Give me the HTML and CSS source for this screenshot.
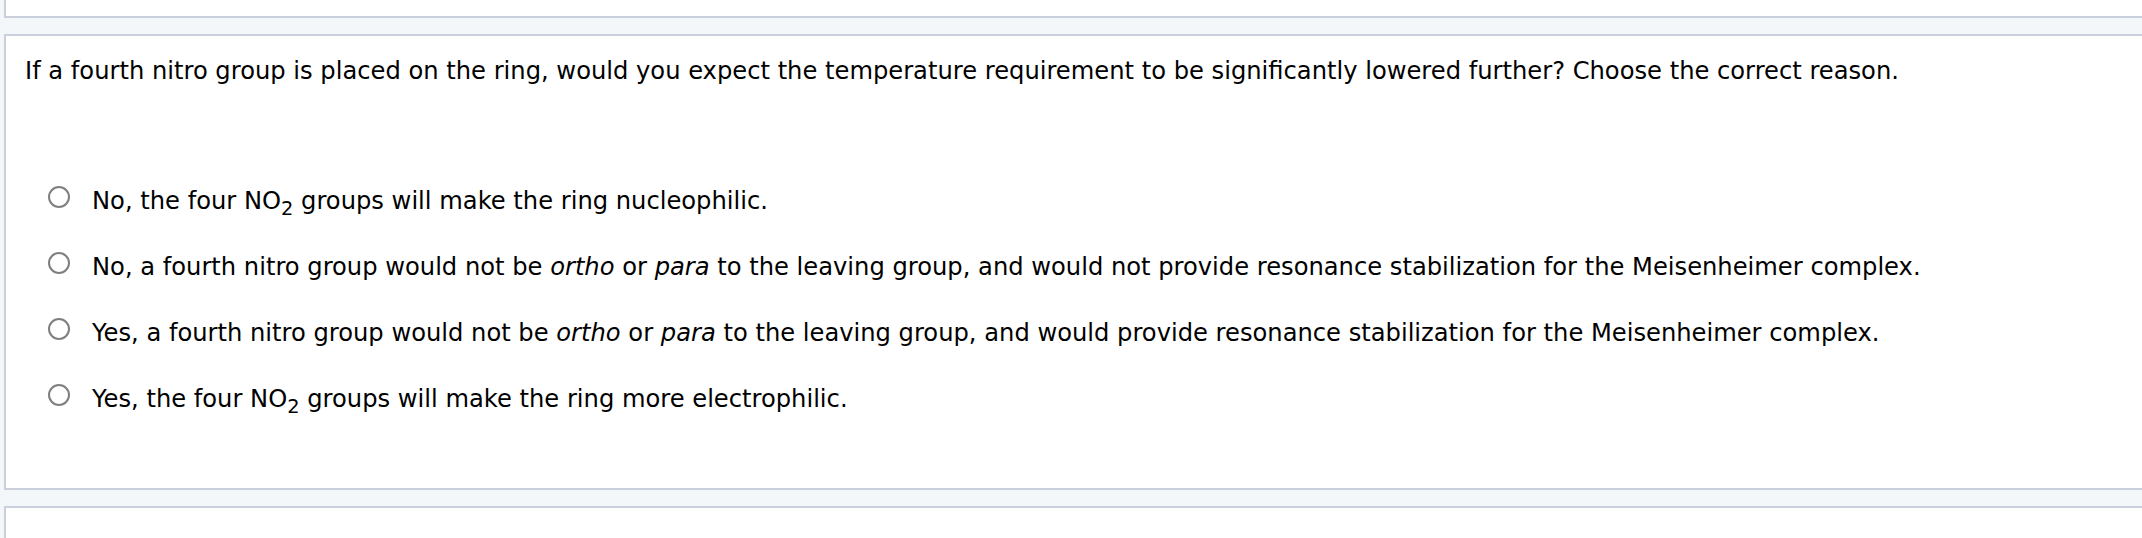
FILE: index.html
```html
<!DOCTYPE html>
<html lang="en">
<head>
<meta charset="utf-8">
<title>Question</title>
<link rel="stylesheet" href="styles.css">
</head>
<body>
<div class="page">
  <div class="panel panel-top"></div>
  <div class="panel panel-main">
    <p class="question">If a fourth nitro group is placed on the ring, would you expect the temperature requirement to be significantly lowered further? Choose the correct reason.</p>
    <div class="options">
      <label class="option"><span class="radio"></span><span class="option-text">No, the four NO<sub>2</sub> groups will make the ring nucleophilic.</span></label>
      <label class="option"><span class="radio"></span><span class="option-text">No, a fourth nitro group would not be <i>ortho</i> or <i>para</i> to the leaving group, and would not provide resonance stabilization for the Meisenheimer complex.</span></label>
      <label class="option"><span class="radio"></span><span class="option-text">Yes, a fourth nitro group would not be <i>ortho</i> or <i>para</i> to the leaving group, and would provide resonance stabilization for the Meisenheimer complex.</span></label>
      <label class="option"><span class="radio"></span><span class="option-text">Yes, the four NO<sub>2</sub> groups will make the ring more electrophilic.</span></label>
    </div>
  </div>
  <div class="panel panel-next"></div>
</div>
</body>
</html>
```

FILE: styles.css
```css
html, body {
  margin: 0;
  padding: 0;
  overflow: hidden;
  background: #f4f7fa;
}

body {
  font-family: "DejaVu Sans", Verdana, sans-serif;
  font-size: 24.2px;
  color: #000;
}

.page {
  display: flex;
  flex-direction: column;
  gap: 16px;
  padding-left: 4px;
  margin-right: -40px;
}

.panel {
  box-sizing: border-box;
  background: #fff;
  border: 2px solid #c9d0dc;
}

.panel-top {
  border-top: none;
  height: 18px;
}

.panel-main {
  height: 456px;
  padding: 20px 19px 0;
}

.panel-next {
  height: 32px;
  border-bottom: none;
}

.question {
  margin: 0;
  line-height: 30px;
}

.options {
  margin-top: 100px;
  padding-left: 23px;
  display: flex;
  flex-direction: column;
  gap: 36px;
}

.option {
  display: flex;
  align-items: flex-start;
  gap: 22px;
  line-height: 30px;
}

.radio {
  flex: none;
  width: 22px;
  height: 22px;
  margin-top: 0;
  box-sizing: border-box;
  border: 2px solid #7f7f7f;
  border-radius: 50%;
  background: #fff;
}

.option-text sub {
  font-size: 0.8em;
  line-height: 0;
  vertical-align: -0.3em;
}
```
